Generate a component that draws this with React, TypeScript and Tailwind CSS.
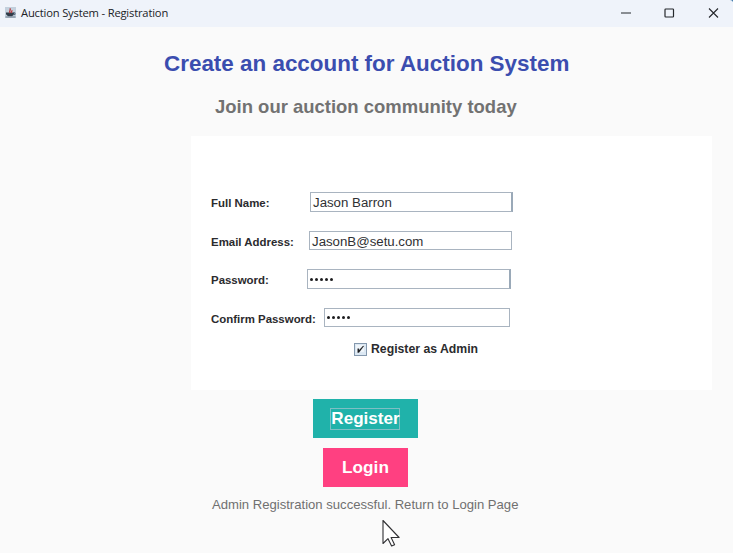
import React from "react";

type FieldProps = {
  label: string;
  value: string;
  row: string;
  box: string;
  secret?: boolean;
};

function Field({ label, value, row, box, secret }: FieldProps) {
  return (
    <div className={`flex items-start ${row}`}>
      <label className="mt-[4px] text-[11.45px] leading-[14px] font-bold whitespace-nowrap text-[#2b2b2e]">{label}</label>
      <div className={`ml-auto flex items-center border border-[#a9b4c0] bg-white pl-[2px] text-[13.25px] text-[#2f3033] ${box}`}>
        {secret ? (
          <span className="flex gap-[2px]">
            {value.split("").map((_, i) => (
              <span key={i} className="size-[3px] rounded-full bg-[#1d1d1f]" />
            ))}
          </span>
        ) : (
          <span className="pt-[2px] leading-4 whitespace-nowrap">{value}</span>
        )}
      </div>
    </div>
  );
}

function JavaIcon() {
  return (
    <svg className="mt-[7px] ml-[5px] size-[11px]" viewBox="0 0 11 11">
      <rect width="11" height="11" fill="#c3d0dd" />
      <path d="M1 5.5h8v2l-2 1.7H3L1 7.3z" fill="#303b48" />
      <path d="M8.5 5.8h1.5v1.8H8" fill="none" stroke="#536375" />
      <path d="M5 6C3.5 4.5 6.2 3.4 5 1.3M6.5 6c-.8-1.2.9-1.4.3-2.7" fill="none" stroke="#b93d40" strokeWidth="1.3" />
      <path d="M.5 10h10" stroke="#6e7d8c" />
    </svg>
  );
}

export default function App() {
  return (
    <div className="relative flex h-[553px] w-[733px] flex-col overflow-hidden bg-[#fafafa] font-['Liberation_Sans',Arial,sans-serif]">
      <header className="flex h-[27px] shrink-0 items-start bg-[#eff3fa]">
        <JavaIcon />
        <span className="mt-[5px] ml-[5px] font-['Open_Sans','Noto_Sans',sans-serif] text-[11.2px] leading-4 tracking-[-0.18px] text-[#202226]">Auction System - Registration</span>
        <svg className="ml-auto h-[27px] w-[133px]" viewBox="0 0 133 27" fill="none" stroke="#25282c">
          <path d="M21 13h10" />
          <rect x="65" y="9" width="8.5" height="8" rx=".7" strokeWidth="1.2" />
          <path d="m109 8.5 9 9m0-9-9 9" strokeWidth="1.1" />
          <path d="M130 0q2 0 3 2V0z" fill="#477fae" stroke="none" />
        </svg>
      </header>
      <h1 className="mt-[23px] ml-[164px] text-[22.43px] leading-7 font-bold whitespace-nowrap text-[#3b4daf]">Create an account for Auction System</h1>
      <h2 className="mt-[17px] ml-[215px] text-[18.48px] leading-6 font-bold whitespace-nowrap text-[#727272]">Join our auction community today</h2>

      <main className="mt-[17px] ml-[191px] flex h-[254px] w-[521px] shrink-0 flex-col bg-white pt-[56px] pl-[20px]">
        <Field label="Full Name:" value="Jason Barron" row="h-[39px] w-[302px]" box="h-[20px] w-[203px] border-r-2 border-r-[#9aa9b8]" />
        <Field label="Email Address:" value="JasonB@setu.com" row="h-[38px] w-[301px]" box="h-[19px] w-[203px]" />
        <Field label="Password:" value="xxxxx" secret row="h-[39px] w-[300px]" box="h-[20px] w-[204px] border-r-2 border-r-[#9aa9b8]" />
        <Field label="Confirm Password:" value="xxxxx" secret row="h-[34px] w-[299px]" box="h-[19px] w-[186px]" />
        <div className="ml-[143px] flex items-center gap-[4px]">
          <svg className="size-[13px]" viewBox="0 0 13 13">
            <rect x=".5" y=".5" width="12" height="12" fill="#dce8f3" stroke="#8498ad" />
            <path d="M2 2h8v7H2z" fill="#eff5fa" />
            <path d="M3.7 5.7h1.2v1.8L9 3h.8L5 9.5H3.7z" fill="#17191c" stroke="#17191c" strokeWidth=".3" />
          </svg>
          <span className="text-[12.25px] leading-[15px] font-bold whitespace-nowrap text-[#2b2b2e]">Register as Admin</span>
        </div>
      </main>

      <button className="mt-[9px] ml-[313px] flex h-[39px] w-[105px] shrink-0 items-center justify-center bg-[#20b2aa] text-[17.1px] font-bold text-white">
        <span className="mr-px flex h-[22px] w-[70px] items-center justify-center border border-[#7dbfc4] pl-px leading-none">Register</span>
      </button>
      <button className="mt-[10px] ml-[323px] h-[39px] w-[85px] shrink-0 bg-[#ff4081] text-[17.2px] font-bold text-white">Login</button>
      <p className="mt-[10px] ml-[212px] text-[13.1px] leading-[16px] whitespace-nowrap text-[#707070]">Admin Registration successful. Return to Login Page</p>
      <svg className="absolute top-[519px] left-[381px] h-[30px] w-[21px]" viewBox="0 0 21 30">
        <path d="M2 1.5v23l5-4.8 3.6 7.3 3-1.3-3.5-7.2h8z" fill="#fff" stroke="#303033" strokeWidth="1.1" strokeLinejoin="round" />
      </svg>
    </div>
  );
}
